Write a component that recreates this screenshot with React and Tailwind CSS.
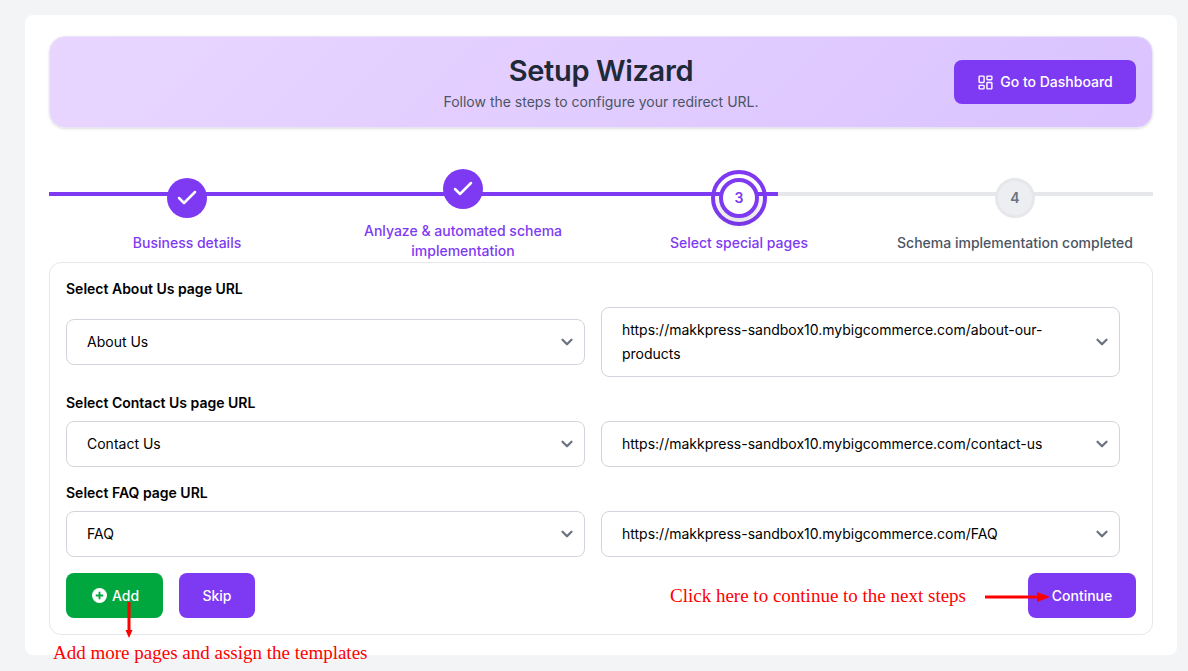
import { Check, LayoutDashboard, ChevronDown } from 'lucide-react';

const PURPLE = 'bg-[#7e3af2]';

// one step of the wizard header
function Step({ state, num, label, topClass, labelClass }) {
  return (
    <li className={`relative flex flex-col items-center ${topClass}`}>
      {state === 'done' && (
        <div className={`w-10 h-10 rounded-full ${PURPLE} flex items-center justify-center`}>
          <Check className="w-6 h-6 text-white" strokeWidth={2.5} />
        </div>
      )}
      {state === 'current' && (
        <div className="relative w-10 h-10">
          <div className="absolute -inset-2 rounded-full border-4 border-[#7e3af2]" />
          <div className="relative w-10 h-10 rounded-full bg-white border-4 border-[#7e3af2] flex items-center justify-center text-[#7e3af2] text-sm font-semibold shadow-[0_6px_10px_rgba(0,0,0,0.12)]">
            {num}
          </div>
        </div>
      )}
      {state === 'todo' && (
        <div className="w-10 h-10 rounded-full bg-[#eceef1] border-[3px] border-[#e5e7eb] flex items-center justify-center text-[#6b7280] text-sm font-semibold">
          {num}
        </div>
      )}
      <div className={`text-sm leading-5 font-medium text-center ${state === 'todo' ? 'text-[#4b5563]' : 'text-[#7e3af2]'} ${labelClass}`}>
        {label}
      </div>
    </li>
  );
}

// looks like a select, but the value wraps
function FakeSelect({ value, tall }) {
  return (
    <div className={`relative flex items-center rounded-lg border border-[#d1d5db] bg-white pl-5 pr-[60px] text-sm text-black ${tall ? 'leading-[24px] py-[10px] h-[70px]' : 'h-[46px]'}`}>
      <span>{value}</span>
      <ChevronDown className="absolute right-2 top-1/2 -translate-y-1/2 w-[18px] h-[18px] text-[#6b7280]" strokeWidth={3} />
    </div>
  );
}

function Row({ left, right, tall }) {
  return (
    <div className="grid grid-cols-2 gap-4 pr-4 items-center">
      <FakeSelect value={left} />
      <FakeSelect value={right} tall={tall} />
    </div>
  );
}

export default function App() {
  return (
    <div className="relative h-[671px] overflow-hidden bg-[#f3f4f6] pt-[15px] pl-[25px] font-['Inter',sans-serif]">
      <div className="w-[1152px] h-[640px] rounded-lg bg-white px-6 pt-[21px]">
        {/* banner */}
        <div className="relative h-[92px] rounded-2xl bg-[linear-gradient(135deg,#e9d6ff,#dac3ff)] border border-[#e9e3f5] shadow-sm flex flex-col items-center pt-4">
          <h1 className="text-[29px] leading-9 tracking-[-0.35px] font-semibold text-[#1f2937]">Setup Wizard</h1>
          <p className="text-sm leading-5 mt-[3px] text-[#4b5563]">Follow the steps to configure your redirect URL.</p>
          <button className={`absolute right-4 top-[23px] w-[182px] h-11 rounded-lg ${PURPLE} text-white text-sm font-medium flex items-center justify-center gap-[6px]`}>
            <LayoutDashboard className="w-[17px] h-[17px]" />
            Go to Dashboard
          </button>
        </div>

        {/* steps */}
        <div className="relative mt-[41px] h-[93px]">
          <div className="absolute left-0 right-0 top-[23px] h-1 bg-[#e5e7eb]" />
          <div className={`absolute left-0 w-[729px] top-[23px] h-1 ${PURPLE}`} />
          <ol className="relative grid grid-cols-4">
            <Step state="done" label="Business details" topClass="pt-[9px]" labelClass="mt-[15px]" />
            <Step state="done" label="Anlyaze & automated schema implementation" topClass="" labelClass="mt-3 w-[220px]" />
            <Step state="current" num="3" label="Select special pages" topClass="pt-[9px]" labelClass="mt-[15px]" />
            <Step state="todo" num="4" label="Schema implementation completed" topClass="pt-[9px]" labelClass="mt-[15px] whitespace-nowrap" />
          </ol>
        </div>

        {/* form */}
        <div className="h-[373px] rounded-xl border border-[#e5e7eb] px-4 pt-4">
          <div className="text-sm leading-5 font-semibold text-black">Select About Us page URL</div>
          <div className="mt-[8px]">
            <Row left="About Us" right="https://makkpress-sandbox10.mybigcommerce.com/about-our-products" tall />
          </div>
          <div className="text-sm leading-5 font-semibold text-black mt-4">Select Contact Us page URL</div>
          <div className="mt-2">
            <Row left="Contact Us" right="https://makkpress-sandbox10.mybigcommerce.com/contact-us" />
          </div>
          <div className="text-sm leading-5 font-semibold text-black mt-4">Select FAQ page URL</div>
          <div className="mt-2">
            <Row left="FAQ" right="https://makkpress-sandbox10.mybigcommerce.com/FAQ" />
          </div>
          <div className="mt-4 flex items-center justify-between">
            <div className="flex gap-4">
              <button className="w-[97px] h-[45px] rounded-lg bg-[#00a63e] text-white text-sm font-medium flex items-center justify-center gap-[5px] pl-[2px]">
                <svg width="15" height="15" viewBox="0 0 16 16">
                  <circle cx="8" cy="8" r="8" fill="#fff" />
                  <path d="M8 4v8M4 8h8" stroke="#00a63e" strokeWidth="2" />
                </svg>
                Add
              </button>
              <button className={`w-[76px] h-[45px] rounded-lg ${PURPLE} text-white text-sm font-medium`}>Skip</button>
            </div>
            <button className={`w-[108px] h-[45px] rounded-lg ${PURPLE} text-white text-sm font-medium`}>Continue</button>
          </div>
        </div>
      </div>

      {/* red notes drawn over the screenshot */}
      <div className="absolute left-[670px] top-[585px] text-[19px] leading-[22px] text-[#ff0000] font-['Liberation_Serif',serif] whitespace-nowrap">
        Click here to continue to the next steps
      </div>
      <svg className="absolute left-[984px] top-[588px]" width="70" height="18" viewBox="0 0 70 18">
        <path d="M1 9H53" stroke="#f00" strokeWidth="3" />
        <path d="M53 4l13 5-13 5z" fill="#f00" />
      </svg>
      <svg className="absolute left-[122px] top-[602px]" width="14" height="38" viewBox="0 0 14 38">
        <path d="M7 0V28" stroke="#f00" strokeWidth="3" />
        <path d="M3.5 28h7L7 36z" fill="#f00" />
      </svg>
      <div className="absolute left-[53px] top-[642px] text-[19px] leading-[22px] text-[#ff0000] font-['Liberation_Serif',serif] whitespace-nowrap">
        Add more pages and assign the templates
      </div>
    </div>
  );
}
